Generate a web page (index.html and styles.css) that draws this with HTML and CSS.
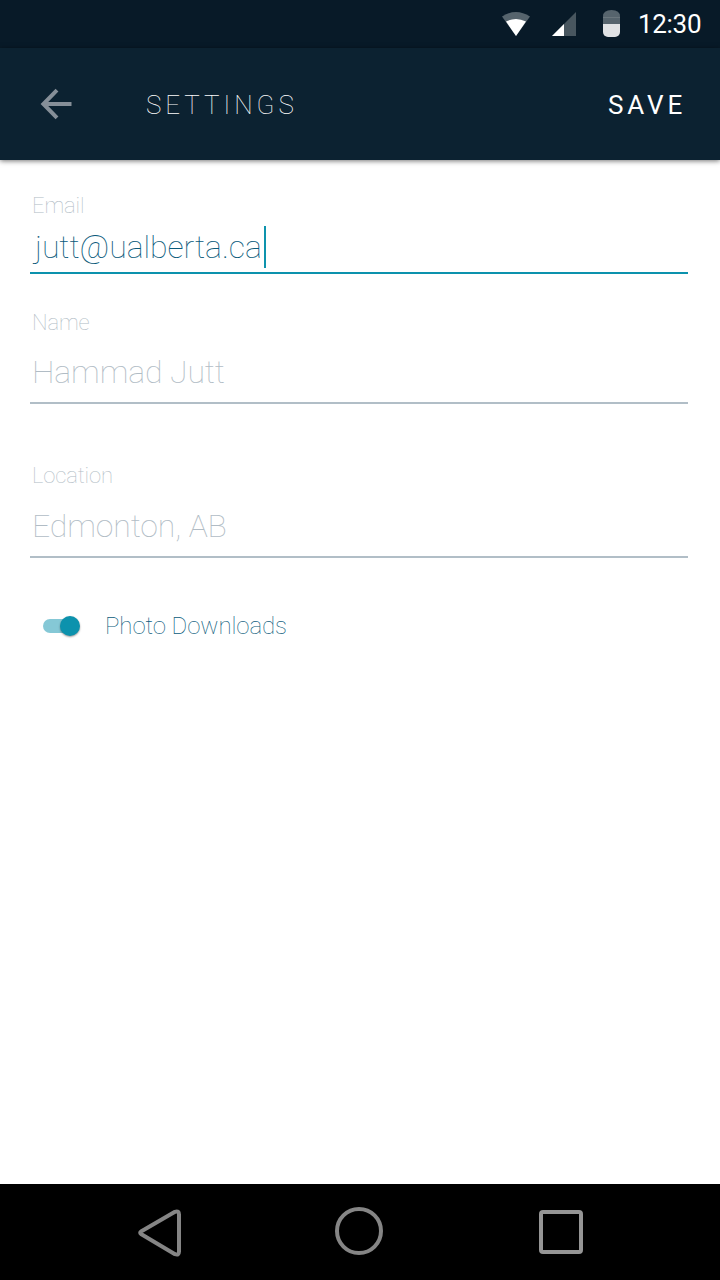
FILE: index.html
```html
<!DOCTYPE html>
<html lang="en">
<head>
<meta charset="utf-8">
<title>Settings</title>
<link rel="stylesheet" href="styles.css">
</head>
<body>
<div class="screen">
  <div class="status-bar">
    <svg class="status-icons" width="120" height="32" viewBox="0 0 120 32" aria-hidden="true">
      <path fill="#56646d" d="M2 8.500Q16-.5 30 8.500L16 28Z"/>
      <path fill="#fff" d="M6 13.500Q16 8.500 26 13.500L16 28Z"/>
      <path fill="#48565f" d="M76 4V28H52Z"/>
      <path fill="#fff" d="M64 16V28H52Z"/>
      <path fill="#56646d" d="M103 16V8.500Q103 2 111.500 2T120 8.500V16z"/>
      <path fill="#6a767d" d="M103 9h17v1h-17z"/>
      <path fill="#e0e2e4" d="M103 16h17v8a5 5 0 0 1-5 5h-7a5 5 0 0 1-5-5z"/>
    </svg>
    <span class="clock">12:30</span>
  </div>
  <header class="app-bar">
    <svg class="back" width="32" height="32" viewBox="0 0 32 32" fill="none" stroke="#868f98" stroke-width="4" aria-label="Back"><path d="M17 2.200L3.400 16L17 29.800M3.500 16H31.500"/></svg>
    <h1 class="title">SETTINGS</h1>
    <button class="save">SAVE</button>
  </header>
  <main class="form">
    <div class="field field-active">
      <span class="label">Email</span>
      <div class="value"><span class="email">jutt@ualberta.ca</span><i class="caret"></i></div>
    </div>
    <div class="field field-name">
      <span class="label">Name</span>
      <div class="value">Hammad Jutt</div>
    </div>
    <div class="field field-location">
      <span class="label">Location</span>
      <div class="value">Edmonton, AB</div>
    </div>
    <div class="toggle-row">
      <span class="switch"><i class="thumb"></i></span>
      <span class="toggle-text">Photo Downloads</span>
    </div>
  </main>
  <nav class="nav-bar">
    <svg width="46" height="50" viewBox="0 0 46 50" fill="none" stroke="#858585" stroke-width="4" stroke-linejoin="round"><path d="M4 25.600Q2.400 26.800 4 28L38 48.200Q42 49.600 42 45.500V8.500Q42 4.400 38 5.800Z" transform="translate(0 -1)"/></svg>
    <svg class="home" width="48" height="48" viewBox="0 0 48 48" fill="none" stroke="#858585" stroke-width="4"><circle cx="24" cy="24" r="22"/></svg>
    <svg class="recents" width="44" height="44" viewBox="0 0 44 44" fill="none" stroke="#959595" stroke-width="4"><rect x="2" y="2" width="40" height="40" rx="2"/></svg>
  </nav>
</div>
</body>
</html>
```
FILE: styles.css
```css
* { box-sizing: border-box; }
body { margin: 0; font-family: Roboto, "Liberation Sans", sans-serif; }
.screen { width: 720px; height: 1280px; display: flex; flex-direction: column; background: #fff; overflow: hidden; }
svg { display: block; flex: none; }

.status-bar { height: 48px; flex: none; background: #081a28; display: flex; padding: 8px 0 0 500px; }
.clock { margin-left: 18px; font-size: 26px; line-height: 32px; letter-spacing: -.3px; color: #fff; }

.app-bar { height: 112px; flex: none; display: flex; align-items: flex-start; background: #0c2231; box-shadow: 0 1px 5px rgba(0, 0, 0, .55); padding: 0 0 0 40px; }
.back { margin-top: 40px; }
.title { margin: 37px 0 0 74px; width: 462px; font-size: 26px; line-height: 40px; font-weight: 100; letter-spacing: 3.950px; color: #fff; opacity: .99; }
.save { margin: 37px 0 0; padding: 0; border: 0; background: none; font: 400 26px/40px Roboto, sans-serif; letter-spacing: 3.900px; color: #fff; }

.form { flex: 1; padding: 31px 32px 0 30px; }
.field { border-bottom: 2px solid #b1bec7; }
.label { display: block; padding-left: 2px; font-size: 22px; line-height: 30px; font-weight: 100; letter-spacing: -.12px; color: #b1bcc5; opacity: .99; }
.value { display: flex; height: 42px; padding-left: 2px; font-size: 32px; line-height: 42px; font-weight: 100; letter-spacing: -.12px; color: #b1bcc5; opacity: .99; }
.field-active { height: 83px; border-color: #0c92ad; }
.field-active .value { margin-top: 5px; padding-left: 5px; letter-spacing: -.05px; color: #07597a; }
.email { width: 229px; }
.caret { width: 2px; height: 42px; background: #0c92ad; }
.field-name { height: 96px; margin-top: 34px; }
.field-name .value { margin-top: 13px; }
.field-location { height: 97px; margin-top: 57px; }
.field-location .value { margin-top: 14px; }

.toggle-row { display: flex; align-items: center; height: 30px; margin: 53px 0 0 13px; }
.switch { display: flex; justify-content: flex-end; align-items: center; width: 37px; height: 14px; border-radius: 7px; background: linear-gradient(90deg, #85c8d6 30px, transparent 30px); }
.thumb { flex: none; width: 20px; height: 20px; border-radius: 50%; background: #0c92ad; box-shadow: 0 1px 2px rgba(0, 0, 0, .4); }
.toggle-text { margin-left: 25px; font-size: 24px; line-height: 30px; font-weight: 100; letter-spacing: -.08px; color: #07597a; opacity: .99; }

.nav-bar { height: 96px; flex: none; background: #000; display: flex; align-items: flex-start; padding: 23px 0 0 137px; }
.home { margin-left: 152px; }
.recents { margin: 3px 0 0 156px; }
```
